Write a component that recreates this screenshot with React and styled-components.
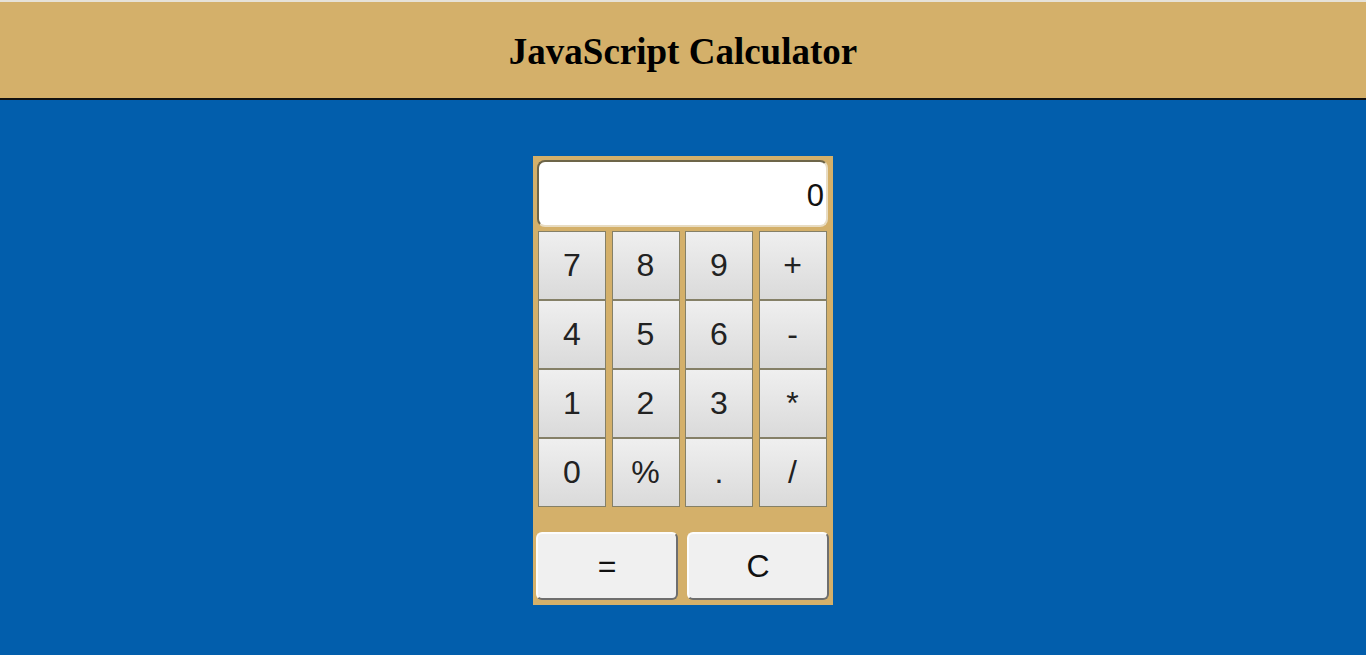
import React from 'react';
import styled, { createGlobalStyle } from 'styled-components';

const tan = '#d4b06a';
const blue = '#025eac';

const GlobalStyle = createGlobalStyle`
    html, body {
        margin: 0;
        padding: 0;
        height: 100%;
        background: ${blue};
    }
    #root {
        min-height: 100vh;
        display: flex;
        flex-direction: column;
    }
`;

const Header = styled.header`
    background: ${tan};
    border-top: 2px solid #e6e2d8;
    border-bottom: 2px solid #111;
    height: 96px;
    display: flex;
    align-items: center;
    justify-content: center;
`;

const Title = styled.h1`
    margin: 0;
    padding-top: 2px;
    font-family: "Liberation Serif", "Times New Roman", serif;
    font-weight: bold;
    font-size: 37px;
    color: #000;
`;

const Main = styled.main`
    flex: 1;
    display: flex;
    justify-content: center;
    padding-top: 56px;
`;

const Calculator = styled.div`
    width: 300px;
    height: 449px;
    box-sizing: border-box;
    background: ${tan};
    padding: 4px 4px 5px 3px;
    display: flex;
    flex-direction: column;
`;

const Display = styled.div`
    height: 67px;
    margin: 0 1px 0 1px;
    box-sizing: border-box;
    background: #fff;
    border: 2px solid;
    border-color: #6d6549 #e8dcc2 #e8dcc2 #6d6549;
    border-radius: 8px;
    display: flex;
    align-items: center;
    justify-content: flex-end;
    padding: 4px 2px 0 0;
    font-family: "Liberation Sans", Arial, sans-serif;
    font-size: 31px;
    color: #111;
`;

const Keys = styled.div`
    display: grid;
    grid-template-columns: repeat(4, 68px);
    grid-auto-rows: 69px;
    column-gap: 5.5px;
    margin: 4px 0 0 2px;
`;

const Key = styled.button`
    box-sizing: border-box;
    margin: 0;
    padding: 0;
    border: 1px solid #858067;
    background: linear-gradient(#efefef, #dadada);
    font-family: "Liberation Sans", Arial, sans-serif;
    font-size: 32px;
    color: #222;
    cursor: pointer;
`;

const Actions = styled.div`
    display: flex;
    justify-content: space-between;
    margin-top: 25px;
`;

const ActionButton = styled.button`
    width: 142px;
    height: 68px;
    box-sizing: border-box;
    margin: 0;
    background: #f0f0f0;
    border: 2px solid;
    border-color: #fdfdfd #6e6e6e #6e6e6e #fdfdfd;
    border-radius: 6px;
    font-family: "Liberation Sans", Arial, sans-serif;
    font-size: 32px;
    color: #111;
    cursor: pointer;
`;

const keys = ['7', '8', '9', '+', '4', '5', '6', '-', '1', '2', '3', '*', '0', '%', '.', '/'];

export default function App() {
    return (
        <>
            <GlobalStyle />
            <Header>
                <Title>JavaScript Calculator</Title>
            </Header>
            <Main>
                <Calculator>
                    <Display>0</Display>
                    <Keys>
                        {keys.map(k => (
                            <Key key={k}>{k}</Key>
                        ))}
                    </Keys>
                    <Actions>
                        <ActionButton>=</ActionButton>
                        <ActionButton>C</ActionButton>
                    </Actions>
                </Calculator>
            </Main>
        </>
    );
}
